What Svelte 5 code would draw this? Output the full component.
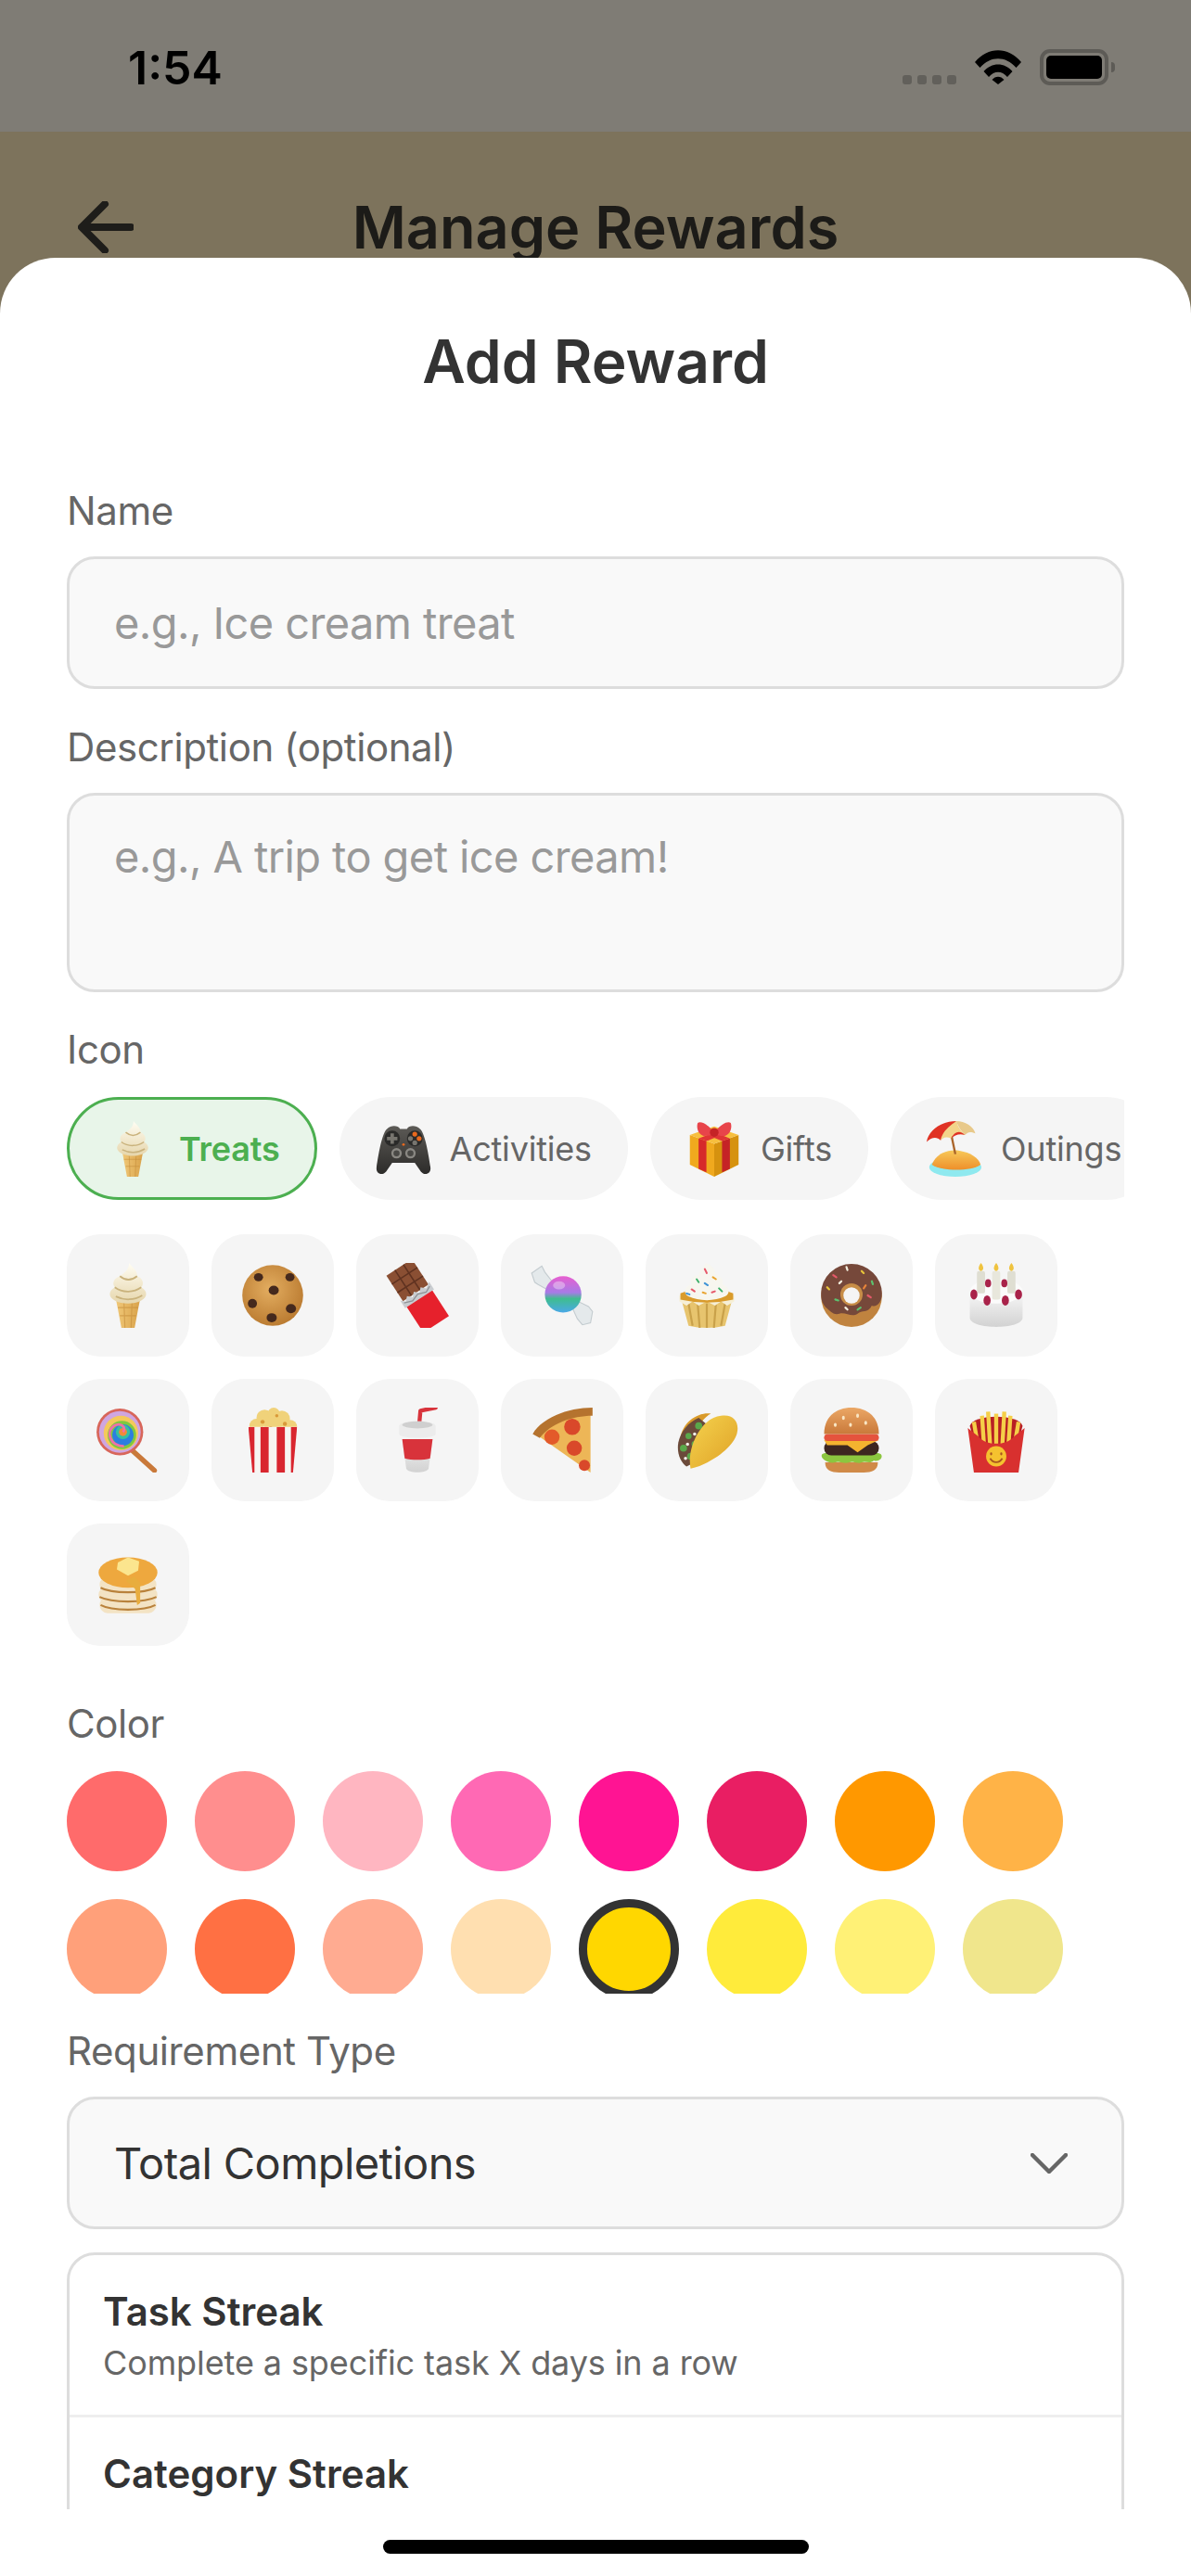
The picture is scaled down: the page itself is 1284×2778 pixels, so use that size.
<script>
  const categories = [
    { id: 'icecream', label: 'Treats', active: true },
    { id: 'gamepad', label: 'Activities' },
    { id: 'gift', label: 'Gifts' },
    { id: 'island', label: 'Outings' }
  ];

  const treats = [
    'icecream', 'cookie', 'chocolate', 'candy', 'cupcake', 'donut', 'cake',
    'lollipop', 'popcorn', 'cup', 'pizza', 'taco', 'burger', 'fries',
    'pancakes'
  ];

  const colors = [
    '#ff6b6b', '#ff8e8e', '#ffb6c1', '#ff69b4', '#ff1493', '#e91e63', '#ff9800', '#ffb347',
    '#ffa07a', '#ff7043', '#ffab91', '#ffdfb0', '#ffd700', '#ffeb3b', '#fff176', '#f0e68c'
  ];
  const selectedColor = '#ffd700';
</script>

<!-- emoji sprite, there is no emoji font on the page -->
<svg class="sprite" aria-hidden="true">
  <defs>
    <linearGradient id="g-cone" x1="0" y1="0" x2="1" y2="0"><stop offset="0" stop-color="#f0c878"/><stop offset="1" stop-color="#d9a24a"/></linearGradient>
    <linearGradient id="g-cream" x1="0" y1="0" x2="0" y2="1"><stop offset="0" stop-color="#fffdf3"/><stop offset="1" stop-color="#e6d6ac"/></linearGradient>
    <radialGradient id="g-cookie" cx=".45" cy=".4" r=".65"><stop offset="0" stop-color="#e3ad60"/><stop offset="1" stop-color="#b8782e"/></radialGradient>
    <linearGradient id="g-candy" x1="0" y1="0" x2="0" y2="1"><stop offset="0" stop-color="#e85fd0"/><stop offset=".45" stop-color="#a77be6"/><stop offset=".62" stop-color="#3fbd8f"/><stop offset="1" stop-color="#4aa8e8"/></linearGradient>
    <linearGradient id="g-pad" x1="0" y1="0" x2="0" y2="1"><stop offset="0" stop-color="#5c5a56"/><stop offset="1" stop-color="#2d2c2a"/></linearGradient>
    <linearGradient id="g-bun" x1="0" y1="0" x2="0" y2="1"><stop offset="0" stop-color="#eba765"/><stop offset="1" stop-color="#c9793a"/></linearGradient>
    <linearGradient id="g-shell" x1="0" y1="0" x2="1" y2="1"><stop offset="0" stop-color="#f5d34e"/><stop offset="1" stop-color="#dfa126"/></linearGradient>
    <linearGradient id="g-white" x1="0" y1="0" x2="0" y2="1"><stop offset="0" stop-color="#fafafa"/><stop offset="1" stop-color="#d2d2d2"/></linearGradient>
    <linearGradient id="g-sand" x1="0" y1="0" x2="0" y2="1"><stop offset="0" stop-color="#f7c95a"/><stop offset="1" stop-color="#ee8f2a"/></linearGradient>
    <clipPath id="c-box"><path d="M8 19 L56 19 L52 64 L12 64 Z"/></clipPath>
  </defs>

  <symbol id="icecream" viewBox="0 0 64 64">
    <path d="M20 35 L44 35 L38.500 64 L25.500 64 Z" fill="url(#g-cone)"/>
    <path d="M22 44 H42 M24 52 H40 M28 38 L29 64 M36 38 L35 64" stroke="#c48c3a" stroke-width="1" opacity=".6" fill="none"/>
    <path d="M33 0 C36 4 42 8 41 13 C47 15 48 21 45 24 C52 28 51 34 45 37 C38 41 26 41 19 37 C13 34 12 28 19 24 C16 20 18 15 24 13 C28 10 33 7 33 0Z" fill="url(#g-cream)"/>
    <path d="M24 13 C30 18 36 17 41 13 M19 24 C27 30 38 29 45 24 M20 33 C28 37 38 37 46 32" stroke="#c9b27c" stroke-width="1.600" fill="none"/>
  </symbol>

  <symbol id="cookie" viewBox="0 0 64 64">
    <circle cx="32" cy="32" r="30" fill="url(#g-cookie)"/>
    <ellipse cx="18" cy="14" rx="4.500" ry="4" fill="#45291d"/>
    <ellipse cx="49" cy="14" rx="4.500" ry="4" fill="#45291d"/>
    <ellipse cx="33" cy="27" rx="5" ry="4.500" fill="#45291d"/>
    <ellipse cx="12" cy="40" rx="4.500" ry="4.500" fill="#45291d"/>
    <ellipse cx="50" cy="45" rx="5" ry="4.500" fill="#45291d"/>
    <ellipse cx="31" cy="54" rx="5" ry="4.500" fill="#45291d"/>
  </symbol>

  <symbol id="chocolate" viewBox="0 0 64 64">
    <g transform="rotate(-33 32 32)">
      <rect x="17" y="-1" width="30" height="30" fill="#8a4f33"/>
      <path d="M27 -1 V29 M37 -1 V29 M17 9 H47 M17 19 H47" stroke="#5f3220" stroke-width="1.400"/>
      <rect x="17" y="32" width="30" height="34" fill="#e6212c"/>
      <path d="M15 27 L19 31 L23 27 L27 31 L31 27 L35 31 L39 27 L43 31 L49 27 V36 H15 Z" fill="#c9ccd0"/>
      <path d="M17 31 L25 34 L33 31 L41 34 L47 31" stroke="#8f9296" stroke-width="1.200" fill="none"/>
    </g>
  </symbol>

  <symbol id="candy" viewBox="0 0 64 64">
    <path d="M2 10 L12 3 L15 9 L22 18 L17 26 L8 21 L5 19 Z" fill="#e4e9eb" stroke="#c3cbcf" stroke-width="1"/>
    <path d="M62 48 L60 59 L52 61 L47 55 L42 44 L48 38 L58 43 Z" fill="#e4e9eb" stroke="#c3cbcf" stroke-width="1"/>
    <circle cx="33" cy="31" r="18" fill="url(#g-candy)"/>
    <ellipse cx="29" cy="22" rx="6" ry="4" fill="#fff" opacity=".35"/>
  </symbol>

  <symbol id="cupcake" viewBox="0 0 64 64">
    <path d="M7 36 L57 36 L50 62 Q32 66 14 62 Z" fill="#e7c46e"/>
    <path d="M14 40 L18 62 M23 40 L25 64 M32 40 V64 M41 40 L39 64 M50 40 L46 62" stroke="#c9a14a" stroke-width="2"/>
    <path d="M5 32 L59 32 L59 38 L52 42 L46 38 L40 42 L32 38 L24 42 L18 38 L12 42 L5 38Z" fill="#f6efd6"/>
    <path d="M6 30 Q32 20 58 30 L58 36 Q32 42 6 36Z" fill="#d99b2c"/>
    <path d="M31 0 C36 2 41 6 40 11 C47 13 49 18 47 21 C54 23 56 30 50 33 C40 38 24 38 14 33 C8 30 10 23 17 21 C15 17 18 12 24 12 C25 7 29 5 31 0Z" fill="#f7f6ef"/>
    <g stroke-width="1.800" stroke-linecap="round">
      <path d="M30 6 L32 10" stroke="#e6596a"/><path d="M22 16 L24 19" stroke="#3fb06b"/><path d="M38 14 L41 16" stroke="#e9a32f"/>
      <path d="M30 20 L33 22" stroke="#3f93d6"/><path d="M17 26 L20 28" stroke="#e6596a"/><path d="M44 25 L47 28" stroke="#3fb06b"/>
      <path d="M28 29 L31 30" stroke="#e9a32f"/><path d="M37 29 L40 28" stroke="#e6596a"/><path d="M12 30 L15 31" stroke="#3f93d6"/>
    </g>
  </symbol>

  <symbol id="donut" viewBox="0 0 64 64">
    <circle cx="32" cy="33" r="30" fill="#c0833f"/>
    <path d="M2 30 A30 29 0 0 1 62 30 C62 40 56 44 52 42 C48 50 42 46 38 50 C32 54 26 48 20 50 C14 52 10 46 7 44 C3 40 2 36 2 30Z" fill="#76483a"/>
    <circle cx="32" cy="31" r="11" fill="#c78d47"/>
    <circle cx="32" cy="32" r="8" fill="#f5f5f5"/>
    <g stroke-width="2" stroke-linecap="round">
      <path d="M27 4 L28 7" stroke="#f4f0e0"/><path d="M42 8 L44 10" stroke="#e9c53a"/><path d="M14 12 L17 14" stroke="#e6596a"/>
      <path d="M52 18 L53 21" stroke="#5cc26f"/><path d="M8 24 L10 26" stroke="#e9c53a"/><path d="M16 36 L19 37" stroke="#5cc26f"/>
      <path d="M48 32 L51 34" stroke="#e6596a"/><path d="M26 44 L28 46" stroke="#f4f0e0"/><path d="M38 46 L41 44" stroke="#5cc26f"/>
      <path d="M20 20 L22 18" stroke="#f4f0e0"/><path d="M46 22 L44 25" stroke="#e8843a"/>
    </g>
  </symbol>

  <symbol id="cake" viewBox="0 0 64 64">
    <path d="M6 26 H58 V54 C58 66 6 66 6 54Z" fill="url(#g-white)"/>
    <ellipse cx="32" cy="28" rx="26" ry="12" fill="#fbfbfb"/>
    <rect x="13" y="8" width="8" height="22" rx="2" fill="#dfded2"/>
    <rect x="28" y="8" width="8" height="28" rx="2" fill="#e8e7dc"/>
    <rect x="43" y="8" width="8" height="22" rx="2" fill="#dfded2"/>
    <path d="M17 0 C20 4 20 7 17 8 C14 7 14 4 17 0Z M32 0 C35 4 35 7 32 8 C29 7 29 4 32 0Z M47 0 C50 4 50 7 47 8 C44 7 44 4 47 0Z" fill="#efc33f"/>
    <g fill="#a9234a">
      <ellipse cx="10" cy="31" rx="3.500" ry="5"/><ellipse cx="23" cy="37" rx="3.500" ry="5"/>
      <ellipse cx="41" cy="37" rx="3.500" ry="5"/><ellipse cx="54" cy="31" rx="3.500" ry="5"/>
      <ellipse cx="24" cy="20" rx="3" ry="4"/><ellipse cx="40" cy="20" rx="3" ry="4"/>
    </g>
  </symbol>

  <symbol id="lollipop" viewBox="0 0 64 64">
    <path d="M36 42 L58 62" stroke="#c9793a" stroke-width="5" stroke-linecap="round"/>
    <circle cx="24" cy="24" r="23" fill="#d8665a"/>
    <circle cx="24" cy="24" r="20.500" fill="#cfa6e0"/>
    <circle cx="25" cy="25" r="17" fill="#f4c95a"/>
    <circle cx="26" cy="27" r="14" fill="#7fc93f"/>
    <circle cx="27" cy="27" r="10.500" fill="#2c7ee0"/>
    <circle cx="27" cy="24" r="7" fill="#35c0a0"/>
    <circle cx="27" cy="24" r="4" fill="#f08a3a"/>
    <path d="M27 24 C31 20 25 14 18 18 C10 24 14 38 28 38" stroke="#f06fa8" stroke-width="2.500" fill="none"/>
  </symbol>

  <symbol id="popcorn" viewBox="0 0 64 64">
    <g fill="#f0d27a">
      <circle cx="16" cy="18" r="7"/><circle cx="24" cy="10" r="8"/><circle cx="33" cy="6" r="6"/><circle cx="41" cy="11" r="8"/>
      <circle cx="49" cy="19" r="7"/><circle cx="32" cy="17" r="9"/>
    </g>
    <g fill="#d99a3a"><circle cx="22" cy="14" r="2"/><circle cx="36" cy="8" r="1.600"/><circle cx="44" cy="16" r="2"/><circle cx="30" cy="20" r="1.800"/></g>
    <path d="M8 19 L56 19 L52 64 L12 64 Z" fill="#f7f5f2"/>
    <g clip-path="url(#c-box)" fill="#d9262f">
      <rect x="8" y="19" width="6" height="46"/><rect x="20" y="19" width="8" height="46"/><rect x="36" y="19" width="8" height="46"/><rect x="50" y="19" width="7" height="46"/>
    </g>
  </symbol>

  <symbol id="cup" viewBox="0 0 64 64">
    <path d="M34 14 L35 3 L50 0" stroke="#d8333b" stroke-width="4" fill="none" stroke-linecap="round" stroke-linejoin="round"/>
    <path d="M16 24 L48 24 L43 60 C41 65 23 65 21 60 Z" fill="url(#g-white)"/>
    <path d="M17 31 L47 31 L44.500 50 C38 52 26 52 19.500 50 Z" fill="#d8333b"/>
    <path d="M14 18 C14 12 50 12 50 18 V26 C50 31 14 31 14 26Z" fill="#ececec"/>
    <ellipse cx="32" cy="17" rx="15" ry="3.500" fill="#cfcfcf"/>
  </symbol>

  <symbol id="pizza" viewBox="0 0 64 64">
    <path d="M60 2 L60 64 L6 26 C16 12 40 2 60 2Z" fill="#edb657"/>
    <path d="M62 0 V8 C42 8 20 16 10 30 L3 26 C12 10 38 0 62 0Z" fill="#b5732e"/>
    <circle cx="42" cy="19" r="8" fill="#d9482a"/>
    <circle cx="22" cy="29" r="7.500" fill="#e35a2a"/>
    <circle cx="44" cy="40" r="7.500" fill="#d9482a"/>
    <circle cx="54" cy="57" r="5.500" fill="#d9482a"/>
  </symbol>

  <symbol id="taco" viewBox="0 0 64 64">
    <path d="M6 30 C8 14 24 4 36 6 C24 12 14 34 14 56Z" fill="#d99a2a"/>
    <path d="M4 34 C6 24 14 14 24 10 L34 18 L24 52 L12 58 C6 54 2 44 4 34Z" fill="#6b4a3a"/>
    <g fill="#5aa84a"><circle cx="9" cy="40" r="3.500"/><circle cx="16" cy="48" r="3.500"/><circle cx="14" cy="28" r="3"/><circle cx="24" cy="18" r="3.500"/><circle cx="20" cy="36" r="3"/></g>
    <g fill="#f3f0e8"><circle cx="13" cy="36" r="1.600"/><circle cx="20" cy="26" r="1.600"/><circle cx="11" cy="50" r="1.600"/></g>
    <path d="M16 60 C12 40 26 10 46 8 C58 6 64 14 62 24 C60 38 36 56 16 60Z" fill="url(#g-shell)"/>
  </symbol>

  <symbol id="burger" viewBox="0 0 64 64">
    <path d="M6 54 H58 C58 62 52 64 44 64 H20 C12 64 6 62 6 54Z" fill="#d08a48"/>
    <path d="M3 46 C8 42 56 42 61 46 C64 50 58 54 54 52 C50 56 46 52 42 54 C38 56 34 52 30 54 C24 56 20 52 16 54 C10 56 0 50 3 46Z" fill="#8cc63f"/>
    <rect x="5" y="33" width="54" height="14" rx="7" fill="#3d2620"/>
    <path d="M5 32 H59 L48 37 L38 44 L28 37 L8 37Z" fill="#f4b32f"/>
    <rect x="5" y="26" width="54" height="7" rx="3.500" fill="#e5533d"/>
    <path d="M5 26 C5 8 18 0 32 0 C46 0 59 8 59 26Z" fill="url(#g-bun)"/>
    <g fill="#f9e6c4"><ellipse cx="24" cy="10" rx="1.400" ry="2"/><ellipse cx="38" cy="8" rx="1.400" ry="2"/><ellipse cx="46" cy="15" rx="1.400" ry="2"/><ellipse cx="16" cy="17" rx="1.400" ry="2"/><ellipse cx="31" cy="17" rx="1.400" ry="2"/></g>
  </symbol>

  <symbol id="fries" viewBox="0 0 64 64">
    <path d="M6 18 C10 6 54 6 58 18 L52 40 H12Z" fill="#b81f24"/>
    <g stroke="#f5cf48" stroke-width="4" stroke-linecap="butt">
      <path d="M14 38 L10 14"/><path d="M20 38 L18 8"/><path d="M26 38 L24 4"/><path d="M32 38 V6"/>
      <path d="M38 38 L40 4"/><path d="M44 38 L46 8"/><path d="M50 38 L54 14"/>
    </g>
    <path d="M4 20 L14 28 C22 38 42 38 50 28 L60 20 L54 64 H10Z" fill="#d8302f"/>
    <circle cx="32" cy="48" r="10" fill="#f5c22f"/>
    <path d="M27 45 V46 M37 45 V46" stroke="#a8551f" stroke-width="2" stroke-linecap="round"/>
    <path d="M26 50 C29 55 35 55 38 50" stroke="#a8551f" stroke-width="1.600" fill="none"/>
  </symbol>

  <symbol id="pancakes" viewBox="0 0 64 64">
    <rect x="4" y="44" width="56" height="16" rx="8" fill="#f3e3c4"/>
    <path d="M5 52 C16 58 48 58 59 52" stroke="#b9823c" stroke-width="2" fill="none"/>
    <rect x="3" y="34" width="58" height="16" rx="8" fill="#f3e3c4"/>
    <path d="M4 44 C16 50 48 50 60 44" stroke="#b9823c" stroke-width="2" fill="none"/>
    <rect x="4" y="24" width="56" height="16" rx="8" fill="#f3e3c4"/>
    <path d="M5 35 C16 41 48 41 59 35" stroke="#b9823c" stroke-width="2" fill="none"/>
    <ellipse cx="32" cy="20" rx="29" ry="15" fill="#eea83e"/>
    <path d="M38 24 L44 30 L44 50 L41 52 L39 36 L30 28Z" fill="#e8ad3e"/>
    <path d="M22 10 L32 5 L43 9 L42 18 L32 23 L21 17Z" fill="#fbe58e"/>
  </symbol>

  <symbol id="gamepad" viewBox="0 0 64 64">
    <path d="M13 9 C18 4 26 5 28 9 L36 9 C38 5 46 4 51 9 C57 14 61 40 63 53 C64 61 56 63 52 58 L45 48 L19 48 L12 58 C8 63 0 61 1 53 C3 40 7 14 13 9Z" fill="url(#g-pad)"/>
    <circle cx="19" cy="20" r="9" fill="#2a2a29"/>
    <path d="M19 14 V26 M13 20 H25" stroke="#77756f" stroke-width="4"/>
    <circle cx="45" cy="20" r="9" fill="#2a2a29"/>
    <circle cx="45" cy="15" r="2.800" fill="#e8691e"/><circle cx="50" cy="20" r="2.800" fill="#e8691e"/>
    <circle cx="40" cy="20" r="2.800" fill="#77756f"/><circle cx="45" cy="25" r="2.800" fill="#77756f"/>
    <circle cx="24" cy="37" r="6" fill="#8a8883"/><circle cx="24" cy="37" r="3.500" fill="#4a4946"/>
    <circle cx="40" cy="37" r="6" fill="#8a8883"/><circle cx="40" cy="37" r="3.500" fill="#4a4946"/>
    <circle cx="32" cy="27" r="1.500" fill="#e8691e"/>
  </symbol>

  <symbol id="gift" viewBox="0 0 64 64">
    <path d="M4 16 L32 26 V64 L4 50Z" fill="#f0a91e"/>
    <path d="M60 16 L32 26 V64 L60 50Z" fill="#d6920f"/>
    <path d="M4 16 L32 6 L60 16 L32 26Z" fill="#f7bf3e"/>
    <path d="M14 20 L23 23 V59 L14 55Z" fill="#d62a2a"/>
    <path d="M50 20 L41 23 V59 L50 55Z" fill="#c52326"/>
    <path d="M14 20 L42 9 L50 12 L23 23Z M14 12 L23 9 L50 20 L41 23Z" fill="#e03535"/>
    <path d="M32 14 C24 2 16 0 13 2 C11 8 14 16 20 17 C26 17 30 16 32 14 C34 16 38 17 44 17 C50 16 53 8 51 2 C48 0 40 2 32 14Z" fill="#e8444a"/>
    <ellipse cx="32" cy="13" rx="5" ry="5" fill="#c52326"/>
  </symbol>

  <symbol id="island" viewBox="0 0 64 64">
    <ellipse cx="33" cy="53" rx="30" ry="11" fill="#8fe9ef"/>
    <path d="M6 50 C12 36 26 32 38 34 C50 36 60 42 62 50 C52 58 16 58 6 50Z" fill="url(#g-sand)"/>
    <path d="M28 14 L33 38" stroke="#a9642a" stroke-width="2.500"/>
    <path d="M0 24 C2 10 18 0 34 0 L36 12 C26 12 20 16 16 22 C12 18 6 18 0 24Z" fill="#e03224"/>
    <path d="M16 22 C18 12 26 6 34 0 C36 6 38 10 44 16 C38 14 30 14 28 20 C24 18 20 18 16 22Z" fill="#f3d48a"/>
    <path d="M34 0 C44 0 54 6 56 14 C50 12 48 12 44 16 C40 12 36 6 34 0Z" fill="#e8c98a"/>
    <path d="M28 20 C32 12 38 10 44 16 C38 14 32 16 28 20Z" fill="#e03224"/>
  </symbol>
</svg>

<div class="screen">
  <div class="status-bar">
    <span class="time">1:54</span>
    <div class="status-icons">
      <div class="signal"><span></span><span></span><span></span><span></span></div>
      <svg class="wifi" viewBox="0 0 50 37" aria-hidden="true">
        <path d="M0 13 C14 -4 36 -4 50 13 L44.500 19 C33 6 17 6 5.500 19Z" fill="#000"/>
        <path d="M9.500 23 C18 13 32 13 40.500 23 L35 29 C29 22 21 22 15 29Z" fill="#000"/>
        <path d="M18.500 32 C22 27.500 28 27.500 31.500 32 L25 37Z" fill="#000"/>
      </svg>
      <div class="battery"><div class="battery-fill"></div></div>
      <div class="battery-nub"></div>
    </div>
  </div>

  <header class="header">
    <svg class="back" viewBox="0 0 60 56" aria-hidden="true">
      <path d="M57 28 H5 M29 3 L4 28 L29 53" fill="none" stroke="#1e1d1a" stroke-width="8" stroke-linecap="round" stroke-linejoin="round"/>
    </svg>
    <h1>Manage Rewards</h1>
  </header>

  <div class="sheet">
    <h2>Add Reward</h2>
    <div class="form">
      <div class="label">Name</div>
      <div class="input">e.g., Ice cream treat</div>

      <div class="label">Description (optional)</div>
      <div class="input textarea">e.g., A trip to get ice cream!</div>

      <div class="label icon-label">Icon</div>
      <div class="chips">
        {#each categories as cat}
          <div class="chip" class:active={cat.active}>
            <svg class="emoji small" aria-hidden="true"><use href={'#' + cat.id}/></svg>
            <span>{cat.label}</span>
          </div>
        {/each}
      </div>
      <div class="tiles">
        {#each treats as t}
          <div class="tile"><svg class="emoji" aria-hidden="true"><use href={'#' + t}/></svg></div>
        {/each}
      </div>

      <div class="label color-label">Color</div>
      <div class="swatches">
        {#each colors as c}
          <div class="swatch" class:picked={c === selectedColor} style="background: {c}"></div>
        {/each}
      </div>

      <div class="label">Requirement Type</div>
      <div class="input select">
        <span>Total Completions</span>
        <svg class="chevron" viewBox="0 0 40 22" aria-hidden="true">
          <path d="M2 2 L20 20 L38 2" fill="none" stroke="#666" stroke-width="4.500" stroke-linecap="round" stroke-linejoin="round"/>
        </svg>
      </div>

      <div class="options">
        <div class="option">
          <div class="option-title">Task Streak</div>
          <div class="option-desc">Complete a specific task X days in a row</div>
        </div>
        <div class="option">
          <div class="option-title">Category Streak</div>
        </div>
      </div>
    </div>
    <div class="home-bar"></div>
  </div>
</div>

<style>
  :global(body) {
    margin: 0;
    background: #7d735c;
  }

  .sprite {
    position: absolute;
    width: 0;
    height: 0;
  }

  .screen {
    position: relative;
    width: 1284px;
    height: 2778px;
    overflow: hidden;
    background: #7d735c;
    font-family: Inter, 'Liberation Sans', sans-serif;
  }

  .status-bar {
    height: 142px;
    background: #7f7c75;
    display: flex;
    justify-content: space-between;
    box-sizing: border-box;
    padding: 0 82px 0 138px;
  }

  .time {
    font-size: 50px;
    font-weight: 600;
    line-height: 56px;
    margin-top: 45px;
    color: #000;
  }

  .status-icons {
    display: flex;
    align-items: flex-start;
    padding-top: 53px;
  }

  .signal {
    display: flex;
    gap: 6px;
    margin-top: 28px;
  }

  .signal span {
    width: 10px;
    height: 10px;
    border-radius: 3px;
    background: #62605b;
  }

  .wifi {
    width: 50px;
    height: 37px;
    margin: 1px 20px 0 20px;
  }

  .battery {
    width: 74px;
    height: 39px;
    box-sizing: border-box;
    border: 4px solid #5d5b56;
    border-radius: 11px;
    padding: 3px;
  }

  .battery-fill {
    height: 100%;
    background: #000;
    border-radius: 5px;
  }

  .battery-nub {
    width: 4px;
    height: 11px;
    margin: 14px 0 0 3px;
    background: #5d5b56;
    border-radius: 0 4px 4px 0;
  }

  .header {
    position: relative;
    display: flex;
    justify-content: center;
    padding-top: 67px;
  }

  .back {
    position: absolute;
    left: 84px;
    top: 75px;
    width: 60px;
    height: 56px;
  }

  h1 {
    margin: 0;
    font-size: 63px;
    line-height: 72px;
    font-weight: 600;
    color: #1c1b18;
  }

  /* bottom sheet sits over the page */
  .sheet {
    position: absolute;
    top: 278px;
    left: 0;
    right: 0;
    bottom: 0;
    background: #fff;
    border-radius: 60px 60px 0 0;
    padding-top: 72px;
  }

  h2 {
    margin: 0 0 92px;
    text-align: center;
    font-size: 64px;
    line-height: 80px;
    font-weight: 600;
    color: #333;
  }

  .form {
    height: 2184px;
    margin: 0 72px;
    overflow: hidden;
  }

  .label {
    height: 58px;
    line-height: 58px;
    font-size: 42px;
    letter-spacing: -0.4px;
    color: #666;
    margin-bottom: 20px;
  }

  .icon-label {
    margin-bottom: 22px;
  }

  .color-label {
    margin-bottom: 22px;
  }

  .input {
    box-sizing: border-box;
    height: 143px;
    border: 3px solid #ddd;
    border-radius: 30px;
    background: #f9f9f9;
    padding: 0 48px;
    margin-bottom: 34px;
    font-size: 47px;
    letter-spacing: -0.6px;
    line-height: 137px;
    color: #999;
  }

  .textarea {
    height: 215px;
    line-height: 60px;
    padding-top: 36px;
    margin-bottom: 33px;
  }

  .chips {
    display: flex;
    gap: 24px;
    overflow: hidden;
    margin-bottom: 37px;
  }

  .chip {
    flex-shrink: 0;
    box-sizing: border-box;
    height: 111px;
    display: flex;
    align-items: center;
    gap: 20px;
    padding: 0 39px;
    background: #f5f5f5;
    border-radius: 56px;
    font-size: 36px;
    letter-spacing: -0.2px;
    color: #666;
  }

  .chip.active {
    border: 3px solid #4caf50;
    background: #e8f5e9;
    padding: 0 37px 0 38px;
    color: #4caf50;
    font-weight: 600;
  }

  .emoji {
    display: block;
    width: 70px;
    height: 70px;
  }

  .emoji.small {
    width: 60px;
    height: 60px;
  }

  .tiles {
    display: flex;
    flex-wrap: wrap;
    gap: 24px;
    width: 1100px;
    margin-bottom: 55px;
  }

  .tile {
    width: 132px;
    height: 132px;
    border-radius: 36px;
    background: #f5f5f5;
    display: flex;
    align-items: center;
    justify-content: center;
  }

  .swatches {
    display: flex;
    flex-wrap: wrap;
    gap: 30px;
    width: 1100px;
    height: 240px;
    overflow: hidden;
    margin-bottom: 33px;
  }

  .swatch {
    box-sizing: border-box;
    width: 108px;
    height: 108px;
    border-radius: 50%;
  }

  .swatch.picked {
    border: 9px solid #333;
  }

  .select {
    height: 143px;
    margin-bottom: 25px;
    display: flex;
    align-items: center;
    justify-content: space-between;
    padding-right: 58px;
    color: #333;
  }

  .chevron {
    width: 40px;
    height: 22px;
  }

  .options {
    border: 3px solid #ddd;
    border-radius: 30px;
    background: #fff;
  }

  .option {
    border-bottom: 3px solid #eee;
    height: 172px;
    padding: 0 36px;
  }

  .option-title {
    font-size: 42px;
    font-weight: 600;
    line-height: 56px;
    padding-top: 33px;
    color: #333;
  }

  .option-desc {
    font-size: 36px;
    line-height: 48px;
    margin-top: 3px;
    letter-spacing: -0.1px;
    color: #666;
  }

  .home-bar {
    position: absolute;
    left: 413px;
    bottom: 24px;
    width: 459px;
    height: 15px;
    border-radius: 8px;
    background: #000;
  }
</style>
